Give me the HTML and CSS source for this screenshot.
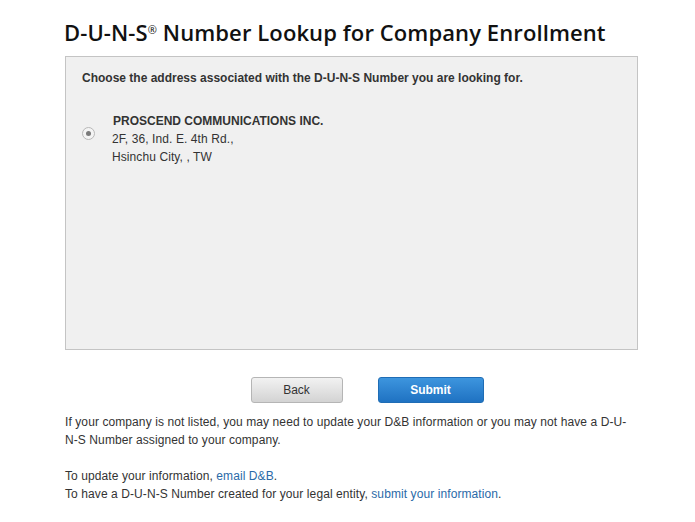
FILE: index.html
```html
<!DOCTYPE html>
<html>
<head>
<meta charset="utf-8">
<link rel="stylesheet" href="styles.css">
</head>
<body>
<div class="page">
  <h1 class="title">D-U-N-S<sup class="reg">®</sup> Number Lookup for Company Enrollment</h1>
  <div class="panel">
    <p class="prompt">Choose the address associated with the D-U-N-S Number you are looking for.</p>
    <div class="option">
      <span class="radio"><span class="dot"></span></span>
      <div class="addr">
        <div class="name">PROSCEND COMMUNICATIONS INC.</div>
        <div>2F, 36, Ind. E. 4th Rd.,</div>
        <div>Hsinchu City, , TW</div>
      </div>
    </div>
  </div>
  <div class="actions">
    <button class="btn back">Back</button>
    <button class="btn submit">Submit</button>
  </div>
  <p class="note">If your company is not listed, you may need to update your D&amp;B information or you may not have a D-U-N-S Number assigned to your company.</p>
  <p class="note links">To update your information, <a href="#">email D&amp;B</a>.<br>To have a D-U-N-S Number created for your legal entity, <a href="#">submit your information</a>.</p>
</div>
</body>
</html>
```

FILE: styles.css
```css
html, body { margin: 0; padding: 0; background: #fff; }
body { font-family: "Liberation Sans", Arial, sans-serif; font-size: 12px; color: #333; }
.page { width: 573px; margin-left: 65px; padding-top: 19px; }
.title {
  margin: 0 0 0 -1px;
  font-family: "Open Sans", "DejaVu Sans", sans-serif;
  font-weight: 600;
  font-size: 22px;
  letter-spacing: 0.1px;
  line-height: 27px;
  color: #111;
  white-space: nowrap;
}
.reg { font-size: 11px; vertical-align: 7px; line-height: 0; font-weight: 400; }
.panel {
  margin-top: 10px;
  background: #f0f0f0;
  border: 1px solid #c4c4c4;
  box-sizing: border-box;
  height: 294px;
}
.prompt { margin: 13px 0 0 16px; font-weight: bold; color: #333; line-height: 16px; }
.option { display: flex; align-items: flex-start; margin: 30px 0 0 16px; }
.radio {
  width: 11px; height: 11px; border-radius: 50%;
  border: 1px solid #b8b8b8; background: #f4f4f4;
  display: flex; align-items: center; justify-content: center;
  margin: 11px 17px 0 0;
}
.dot { width: 5px; height: 5px; border-radius: 50%; background: #7a7a7a; }
.addr { line-height: 18px; margin-top: -4px; letter-spacing: 0.09px; }
.name { font-weight: bold; margin-left: 1px; letter-spacing: 0; }
.actions { display: flex; justify-content: center; gap: 35px; margin-top: 27px; margin-left: 31px; }
.btn {
  font-family: "Liberation Sans", Arial, sans-serif;
  font-size: 12px;
  height: 26px;
  border-radius: 3px;
  cursor: pointer;
  padding: 0;
}
.back {
  width: 92px;
  color: #333;
  border: 1px solid #b5b5b5;
  background: linear-gradient(#f2f2f2, #d3d3d3);
}
.submit {
  width: 106px;
  color: #fff;
  font-weight: bold;
  border: 1px solid #1f6db5;
  background: linear-gradient(#3d95de, #1f72c2);
}
.note { margin: 10px 0 0 0; line-height: 18px; color: #333; letter-spacing: 0.09px; }
.links { margin-top: 18px; }
a { color: #2a6aa8; text-decoration: none; }
```
